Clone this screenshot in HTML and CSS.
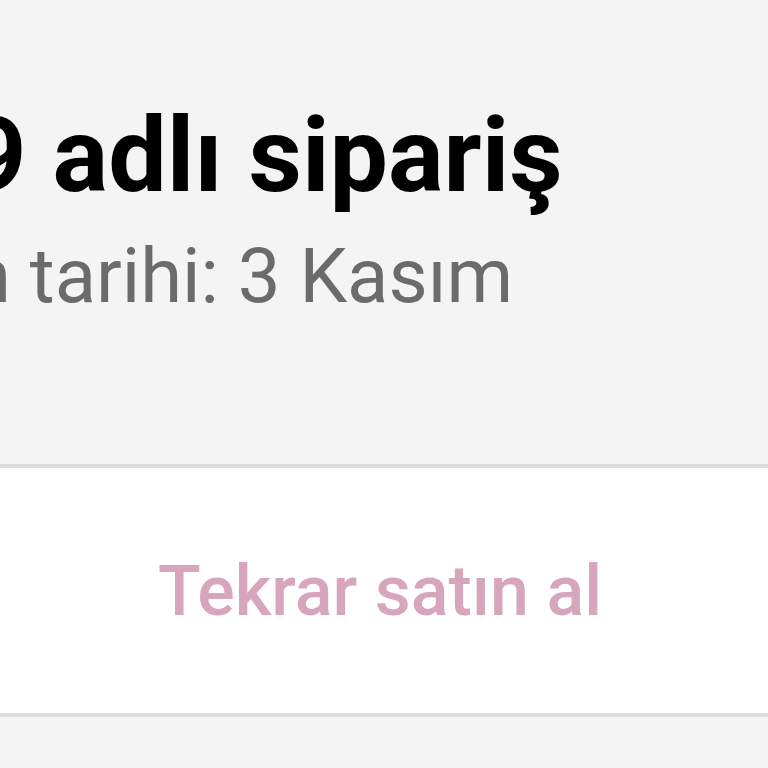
FILE: index.html
```html
<!DOCTYPE html>
<html>

<head>
    <meta name="viewport" content="width=device-width, initial-scale=1">
    <title>Sipariş</title>
    <link rel="stylesheet" href="styles.css">
</head>

<body>
    <div class="order-head">
        <h1 class="order-title">9 adlı sipariş</h1>
        <div class="order-date">n tarihi: 3 Kasım</div>
    </div>
    <div class="order-actions">
        <a class="rebuy" href="#">Tekrar satın al</a>
    </div>
</body>

</html>
```

FILE: styles.css
```css
body {
    margin: 0;
    background-color: #f4f4f4;
    font-family: Roboto, "Noto Sans", sans-serif;
    overflow: hidden;
}

.order-head {
    padding-top: 96px;
    height: 368px;
    white-space: nowrap;
}

.order-title {
    margin: 0 0 15px -33px;
    font-size: 104px;
    line-height: 120px;
    font-weight: 700;
    color: #000;
}

.order-date {
    margin-left: -31px;
    font-size: 76px;
    line-height: 90px;
    color: #6b6b6b;
}

.order-actions {
    background-color: #fff;
    border-top: 4px solid #dcdcdc;
    border-bottom: 4px solid #dcdcdc;
    height: 245px;
    display: flex;
    align-items: center;
    justify-content: center;
    padding-right: 8px;
}

.rebuy {
    font-size: 70px;
    font-weight: 500;
    color: #d8a6bc;
    text-decoration: none;
}
```
